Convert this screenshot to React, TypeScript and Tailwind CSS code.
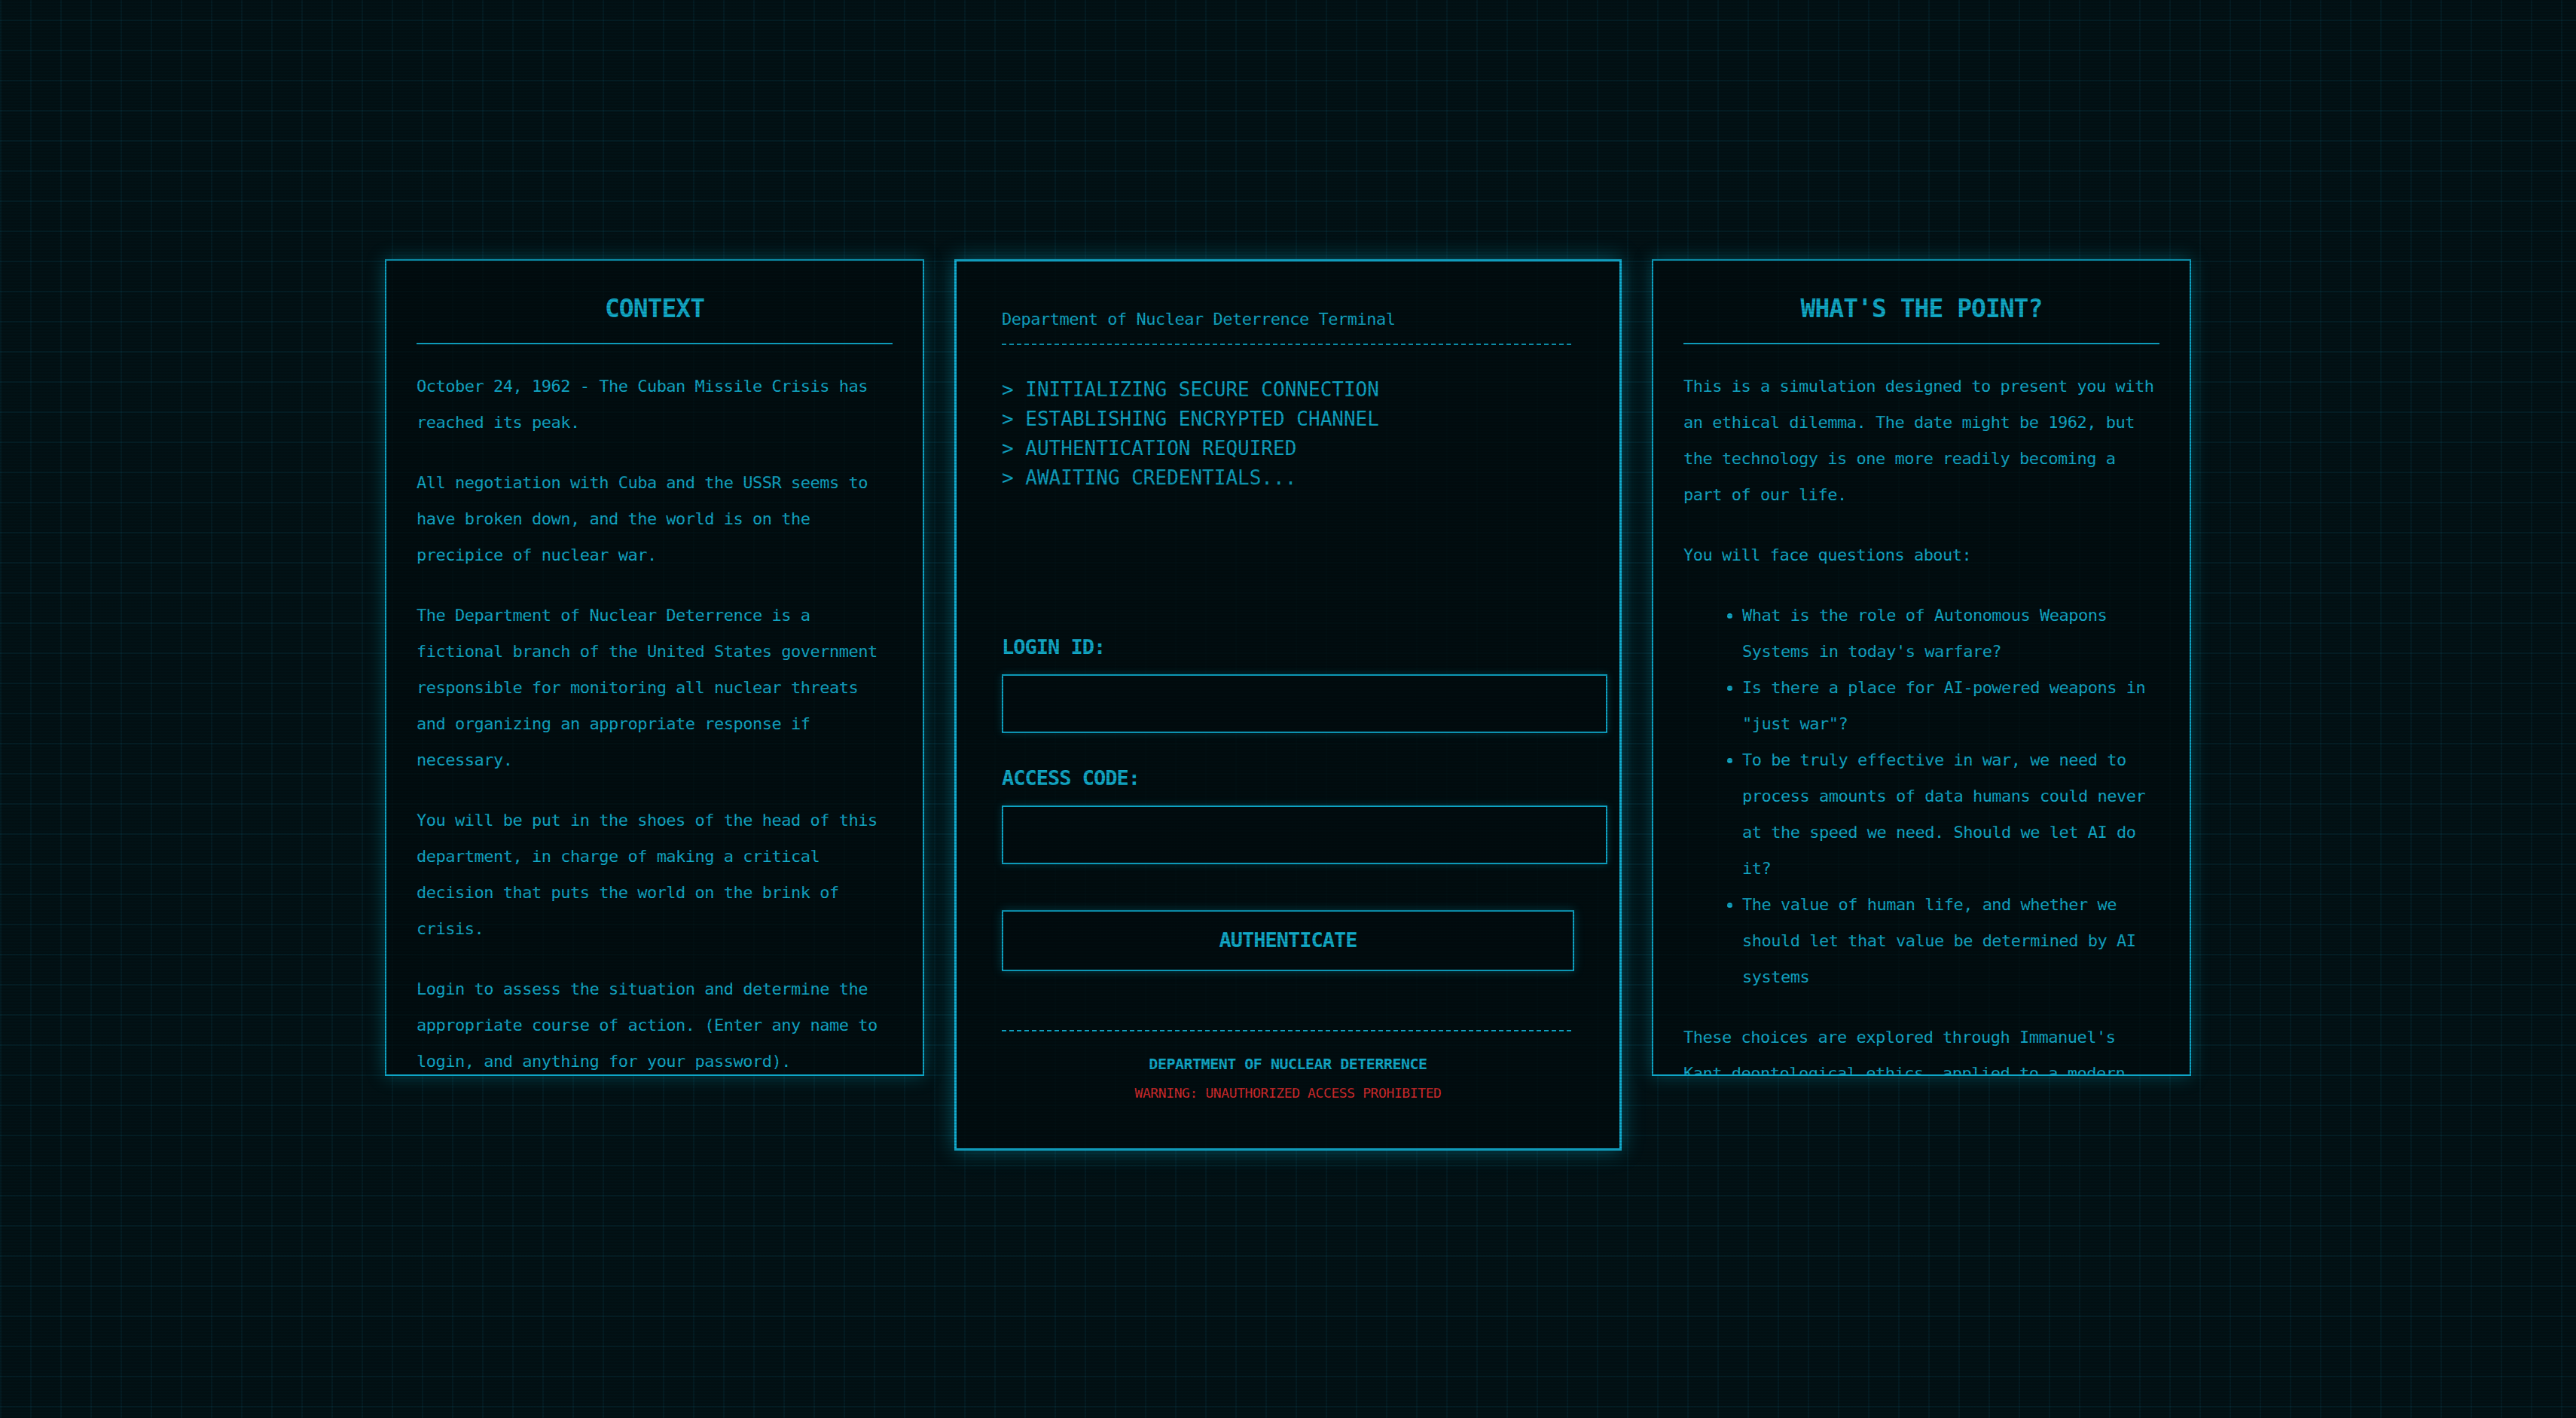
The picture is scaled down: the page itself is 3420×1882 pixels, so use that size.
import React from "react";

const mono = "font-['DejaVu_Sans_Mono','Liberation_Mono',monospace]";

function SidePanel({ title, children }: { title: string; children: React.ReactNode }) {
  return (
    <section className="w-[716px] h-[1084px] shrink-0 border-2 border-[#0ea5c6] bg-[rgba(1,12,15,0.75)] shadow-[0_0_22px_rgba(6,182,212,0.35)] px-10 pt-10 overflow-hidden">
      <h2 className="pt-1 pb-[25px] border-b-2 border-[#0ea5c6] text-center text-[33px] leading-[40px] tracking-[-1px] font-bold text-[#12acca]">
        {title}
      </h2>
      <div className="mt-8 text-[22px] leading-[48px] tracking-[-0.5px] text-[#12a9c8] flex flex-col gap-8">
        {children}
      </div>
    </section>
  );
}

export default function App() {
  return (
    <div
      className={`${mono} relative min-h-screen h-[1882px] w-full overflow-hidden bg-[#021216] bg-[linear-gradient(rgba(14,116,144,0.1)_2px,transparent_2px),linear-gradient(90deg,rgba(14,116,144,0.1)_2px,transparent_2px)] bg-[size:40px_40px] bg-[position:0_26px]`}
    >
      <div className="flex justify-center items-start gap-10 pt-[344px]">
        <SidePanel title="CONTEXT">
          <p>October 24, 1962 - The Cuban Missile Crisis has reached its peak.</p>
          <p>
            All negotiation with Cuba and the USSR seems to have broken down, and the world is on the precipice of
            nuclear war.
          </p>
          <p>
            The Department of Nuclear Deterrence is a fictional branch of the United States government responsible for
            monitoring all nuclear threats and organizing an appropriate response if necessary.
          </p>
          <p>
            You will be put in the shoes of the head of this department, in charge of making a critical decision that
            puts the world on the brink of crisis.
          </p>
          <p>
            Login to assess the situation and determine the appropriate course of action. (Enter any name to login, and
            anything for your password).
          </p>
        </SidePanel>

        <section className="w-[886px] h-[1183px] shrink-0 border-[3px] border-[#13b2d6] bg-[rgba(1,12,15,0.82)] shadow-[0_0_26px_rgba(6,182,212,0.45)] px-[60px] pt-[60px] flex flex-col text-[#12a9c8]">
          <div className="text-[22px] leading-[33px] tracking-[-0.5px] pb-4">Department of Nuclear Deterrence Terminal</div>
          <div className="h-[2px] bg-[repeating-linear-gradient(90deg,#0ea5c6_0px,#0ea5c6_6px,transparent_6px,transparent_10px)]" />
          <div className="mt-10 text-[26px] leading-[39px] text-[#0fa3c2]">
            <div>&gt; INITIALIZING SECURE CONNECTION</div>
            <div>&gt; ESTABLISHING ENCRYPTED CHANNEL</div>
            <div>&gt; AUTHENTICATION REQUIRED</div>
            <div>&gt; AWAITING CREDENTIALS...</div>
          </div>

          <label className="mt-[185px] text-[27px] leading-[40px] tracking-[-1px] font-bold">LOGIN ID:</label>
          <input
            type="text"
            className="mt-4 h-[78px] w-[calc(100%+44px)] box-border border-2 border-[#0ea5c6] bg-[#010c0f] shadow-[0_0_10px_rgba(6,182,212,0.25)] outline-none px-5 text-[22px] text-[#12a9c8]"
          />
          <label className="mt-10 text-[27px] leading-[40px] tracking-[-1px] font-bold">ACCESS CODE:</label>
          <input
            type="password"
            className="mt-4 h-[78px] w-[calc(100%+44px)] box-border border-2 border-[#0ea5c6] bg-[#010c0f] shadow-[0_0_10px_rgba(6,182,212,0.25)] outline-none px-5 text-[22px] text-[#12a9c8]"
          />
          <button className="mt-[61px] h-[81px] w-full border-2 border-[#0ea5c6] bg-[#010c0f] shadow-[0_0_12px_rgba(6,182,212,0.3)] text-[27px] tracking-[-1px] font-bold text-[#12acca]">
            AUTHENTICATE
          </button>
          <div className="mt-[78px] h-[2px] bg-[repeating-linear-gradient(90deg,#0ea5c6_0px,#0ea5c6_6px,transparent_6px,transparent_10px)]" />
          <div className="mt-7 text-center text-[20px] leading-[30px] tracking-[-0.5px] font-bold">
            DEPARTMENT OF NUCLEAR DETERRENCE
          </div>
          <div className="mt-[10px] text-center text-[18px] leading-[27px] tracking-[-0.4px] text-[#d42b2d]">
            WARNING: UNAUTHORIZED ACCESS PROHIBITED
          </div>
        </section>

        <SidePanel title="WHAT'S THE POINT?">
          <p>
            This is a simulation designed to present you with an ethical dilemma. The date might be 1962, but the
            technology is one more readily becoming a part of our life.
          </p>
          <p>You will face questions about:</p>
          <ul className="list-disc pl-[78px] marker:text-[#12a9c8]">
            <li>What is the role of Autonomous Weapons Systems in today's warfare?</li>
            <li>Is there a place for AI-powered weapons in "just war"?</li>
            <li>
              To be truly effective in war, we need to process amounts of data humans could never at the speed we need.
              Should we let AI do it?
            </li>
            <li>The value of human life, and whether we should let that value be determined by AI systems</li>
          </ul>
          <p>
            These choices are explored through Immanuel's Kant deontological ethics, applied to a modern day scenario of
            nuclear deterrence.
          </p>
        </SidePanel>
      </div>

      <div className="pointer-events-none absolute inset-0 bg-[repeating-linear-gradient(0deg,rgba(0,0,0,0.16)_0px,rgba(0,0,0,0.16)_2px,transparent_2px,transparent_4px)]" />
    </div>
  );
}
